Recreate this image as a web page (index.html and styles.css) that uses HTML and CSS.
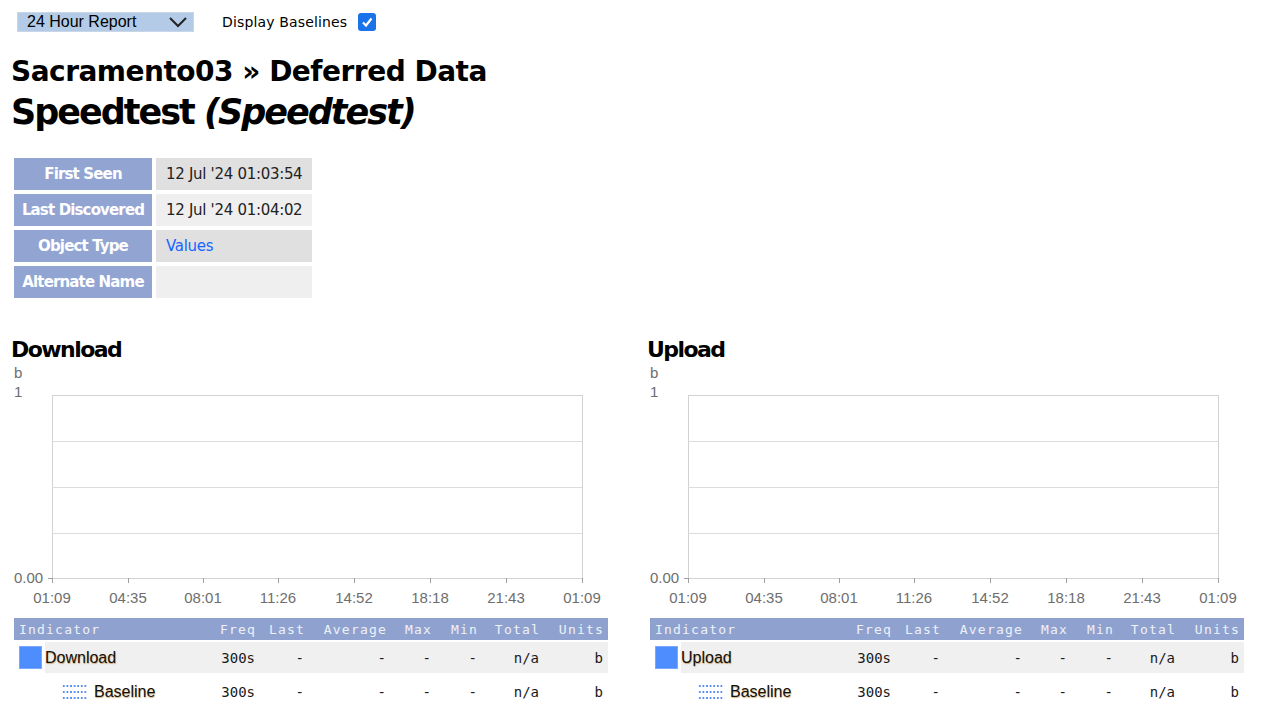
FILE: index.html
```html
<!DOCTYPE html>
<html>
<head>
<meta charset="utf-8">
<link rel="stylesheet" href="styles.css">
</head>
<body>
<div class="toolbar">
  <div class="select">24 Hour Report
    <svg class="chev" width="20" height="12" viewBox="0 0 20 12"><path d="M2 2 L10 10 L18 2" fill="none" stroke="#222" stroke-width="2"/></svg>
  </div>
  <label class="baselines">Display Baselines <span class="check"><svg width="14" height="14" viewBox="0 0 14 14"><path d="M3 7.5 L6 10.5 L11.5 3.5" fill="none" stroke="#fff" stroke-width="2.2"/></svg></span></label>
</div>
<h1 class="crumb">Sacramento03 » Deferred Data</h1>
<h2 class="title">Speedtest <em>(Speedtest)</em></h2>
<table class="info">
  <tr><th>First Seen</th><td class="dark">12 Jul '24 01:03:54</td></tr>
  <tr><th>Last Discovered</th><td>12 Jul '24 01:04:02</td></tr>
  <tr><th>Object Type</th><td class="dark"><a href="#">Values</a></td></tr>
  <tr><th>Alternate Name</th><td></td></tr>
</table>
<div class="panels">
  <section class="panel">
    <h3>Download</h3>
    <svg class="chart" width="600" height="245" viewBox="0 0 600 245">
      <g class="grid">
        <rect x="41.5" y="31.5" width="530" height="183" fill="none" stroke="#d2d2d2"/>
        <line x1="41" y1="77.5" x2="571" y2="77.5"/>
        <line x1="41" y1="123.5" x2="571" y2="123.5"/>
        <line x1="41" y1="169.5" x2="571" y2="169.5"/>
      </g>
      <g class="ticks">
        <line x1="37" y1="214.5" x2="41" y2="214.5"/>
        <line x1="41.5" y1="214" x2="41.5" y2="219"/>
        <line x1="117.5" y1="214" x2="117.5" y2="219"/>
        <line x1="192.5" y1="214" x2="192.5" y2="219"/>
        <line x1="267.5" y1="214" x2="267.5" y2="219"/>
        <line x1="343.5" y1="214" x2="343.5" y2="219"/>
        <line x1="419.5" y1="214" x2="419.5" y2="219"/>
        <line x1="495.5" y1="214" x2="495.5" y2="219"/>
        <line x1="571.5" y1="214" x2="571.5" y2="219"/>
      </g>
      <g class="lbl">
        <text x="3" y="14">b</text>
        <text x="3" y="33">1</text>
        <text x="3" y="219">0.00</text>
      </g>
      <g class="lbl mid">
        <text x="41" y="239">01:09</text>
        <text x="117" y="239">04:35</text>
        <text x="192" y="239">08:01</text>
        <text x="267" y="239">11:26</text>
        <text x="343" y="239">14:52</text>
        <text x="419" y="239">18:18</text>
        <text x="495" y="239">21:43</text>
        <text x="571" y="239">01:09</text>
      </g>
    </svg>
    <table class="ind">
      <colgroup><col class="c-sw"><col class="c-name"><col class="c-freq"><col class="c-last"><col class="c-avg"><col class="c-max"><col class="c-min"><col class="c-tot"><col class="c-unit"></colgroup>
      <tr class="hd"><th colspan="2" class="l">Indicator</th><th>Freq</th><th>Last</th><th>Average</th><th>Max</th><th>Min</th><th>Total</th><th>Units</th></tr>
      <tr class="main"><td class="sw"><span class="swatch"></span></td><td class="name">Download</td><td>300s</td><td>-</td><td>-</td><td>-</td><td>-</td><td>n/a</td><td>b</td></tr>
      <tr class="base"><td class="sw"></td><td class="name"><span class="dots"></span>Baseline</td><td>300s</td><td>-</td><td>-</td><td>-</td><td>-</td><td>n/a</td><td>b</td></tr>
    </table>
  </section>
  <section class="panel">
    <h3>Upload</h3>
    <svg class="chart" width="600" height="245" viewBox="0 0 600 245">
      <g class="grid">
        <rect x="41.5" y="31.5" width="530" height="183" fill="none" stroke="#d2d2d2"/>
        <line x1="41" y1="77.5" x2="571" y2="77.5"/>
        <line x1="41" y1="123.5" x2="571" y2="123.5"/>
        <line x1="41" y1="169.5" x2="571" y2="169.5"/>
      </g>
      <g class="ticks">
        <line x1="37" y1="214.5" x2="41" y2="214.5"/>
        <line x1="41.5" y1="214" x2="41.5" y2="219"/>
        <line x1="117.5" y1="214" x2="117.5" y2="219"/>
        <line x1="192.5" y1="214" x2="192.5" y2="219"/>
        <line x1="267.5" y1="214" x2="267.5" y2="219"/>
        <line x1="343.5" y1="214" x2="343.5" y2="219"/>
        <line x1="419.5" y1="214" x2="419.5" y2="219"/>
        <line x1="495.5" y1="214" x2="495.5" y2="219"/>
        <line x1="571.5" y1="214" x2="571.5" y2="219"/>
      </g>
      <g class="lbl">
        <text x="3" y="14">b</text>
        <text x="3" y="33">1</text>
        <text x="3" y="219">0.00</text>
      </g>
      <g class="lbl mid">
        <text x="41" y="239">01:09</text>
        <text x="117" y="239">04:35</text>
        <text x="192" y="239">08:01</text>
        <text x="267" y="239">11:26</text>
        <text x="343" y="239">14:52</text>
        <text x="419" y="239">18:18</text>
        <text x="495" y="239">21:43</text>
        <text x="571" y="239">01:09</text>
      </g>
    </svg>
    <table class="ind">
      <colgroup><col class="c-sw"><col class="c-name"><col class="c-freq"><col class="c-last"><col class="c-avg"><col class="c-max"><col class="c-min"><col class="c-tot"><col class="c-unit"></colgroup>
      <tr class="hd"><th colspan="2" class="l">Indicator</th><th>Freq</th><th>Last</th><th>Average</th><th>Max</th><th>Min</th><th>Total</th><th>Units</th></tr>
      <tr class="main"><td class="sw"><span class="swatch"></span></td><td class="name">Upload</td><td>300s</td><td>-</td><td>-</td><td>-</td><td>-</td><td>n/a</td><td>b</td></tr>
      <tr class="base"><td class="sw"></td><td class="name"><span class="dots"></span>Baseline</td><td>300s</td><td>-</td><td>-</td><td>-</td><td>-</td><td>n/a</td><td>b</td></tr>
    </table>
  </section>
</div>
</body>
</html>
```
FILE: styles.css
```css
html, body { background: #fff; }
body {
  margin: 0;
  padding: 12px 11px 0 11px;
  font-family: "DejaVu Sans", Verdana, sans-serif;
  color: #000;
}
.toolbar {
  display: flex;
  align-items: center;
  height: 20px;
  padding-left: 6px;
}
.select {
  width: 177px;
  height: 20px;
  box-sizing: border-box;
  background: #b3cbe6;
  border: 1px solid #c8d6e8;
  font-family: "Liberation Sans", Arial, sans-serif;
  font-size: 16px;
  line-height: 18px;
  padding-left: 9px;
  display: flex;
  align-items: center;
  justify-content: space-between;
  padding-right: 5px;
}
.chev { display: block; }
.baselines {
  margin-left: 28px;
  font-size: 14px;
  letter-spacing: 0.15px;
  display: flex;
  align-items: center;
}
.check {
  width: 18px;
  height: 18px;
  box-sizing: border-box;
  margin-left: 11px;
  border-radius: 3px;
  background: #1a73e8;
  display: inline-flex;
  align-items: center;
  justify-content: center;
}
.check svg { display: block; }
.crumb {
  margin: 23px 0 0 0;
  font-size: 28px;
  line-height: 34px;
  font-weight: bold;
  letter-spacing: -0.5px;
}
.title {
  margin: 2px 0 0 0;
  font-size: 35px;
  line-height: 42px;
  font-weight: bold;
  letter-spacing: -2px;
}
.title em { font-style: oblique; }
.info {
  margin: 21px 0 0 -1px;
  border-spacing: 4px 4px;
  font-size: 15px;
}
.info th {
  width: 138px;
  box-sizing: border-box;
  height: 32px;
  padding: 0;
  background: #92a5d2;
  color: #fff;
  font-weight: bold;
  font-size: 15px;
  letter-spacing: -0.85px;
  text-align: center;
}
.info td {
  width: 156px;
  box-sizing: border-box;
  height: 32px;
  padding: 0 10px;
  background: #efefef;
  color: #222;
  letter-spacing: -0.3px;
  white-space: nowrap;
}
.info td.dark { background: #e0e0e0; }
.info a { color: #1565ff; text-decoration: none; }
.panels {
  display: flex;
  gap: 36px;
  margin-top: 35px;
}
.panel { width: 600px; }
.panel h3 {
  margin: 0 0 1px 0;
  font-size: 22px;
  line-height: 26px;
  font-weight: bold;
  letter-spacing: -1.55px;
}
.chart { display: block; margin-top: 0; }
.grid line { stroke: #dcdcdc; stroke-width: 1; }
.ticks line { stroke: #a0a0a0; stroke-width: 1; }
.lbl text {
  font-family: "Liberation Sans", Arial, sans-serif;
  font-size: 15px;
  fill: #6e6e6e;
}
.lbl.mid text { text-anchor: middle; }
.ind {
  margin: 7px 0 0 3px;
  width: 594px;
  table-layout: fixed;
  border-collapse: separate;
  border-spacing: 0 2px;
  font-family: "DejaVu Sans Mono", monospace;
  font-size: 14px;
}
.c-sw { width: 31px; }
.c-name { width: 167px; }
.c-freq { width: 48px; }
.c-last { width: 49px; }
.c-avg { width: 82px; }
.c-max { width: 45px; }
.c-min { width: 46px; }
.c-tot { width: 62px; }
.c-unit { width: 64px; }
.ind th {
  background: #8fa2cf;
  color: #eef1f8;
  font-weight: normal;
  font-size: 13px;
  height: 22px;
  padding: 0 4px 0 0;
  text-align: right;
  letter-spacing: 1.2px;
  white-space: nowrap;
}
.ind th.l { text-align: left; padding-left: 5px; }
.ind td {
  text-align: right;
  padding: 0 5px 0 0;
  color: #1a1a1a;
  white-space: nowrap;
}
.ind tr.main td { height: 31px; background: #f0f0f0; }
.ind tr.main td.sw { background: #fff; }
.ind tr.base td { height: 34px; }
.ind td.sw { padding: 0 0 0 5px; text-align: left; }
.swatch {
  display: block;
  width: 23px;
  height: 23px;
  background: #4d8dfd;
  box-shadow: inset 0 0 0 1px #7aa8ff;
}
.ind td.name {
  text-align: left;
  font-family: "Liberation Sans", Arial, sans-serif;
  font-size: 16px;
  color: #111;
  text-shadow: 0.5px 0.5px 1px rgba(190, 120, 30, 0.6);
}
.dots {
  display: inline-block;
  vertical-align: middle;
  width: 25px;
  height: 17px;
  margin: 0 7px 0 17px;
  background-image:
    radial-gradient(circle, #5b8ff2 1.1px, transparent 1.4px);
  background-size: 3.6px 6px;
  background-position: 0 1px;
  position: relative;
  top: -2px;
}
```
